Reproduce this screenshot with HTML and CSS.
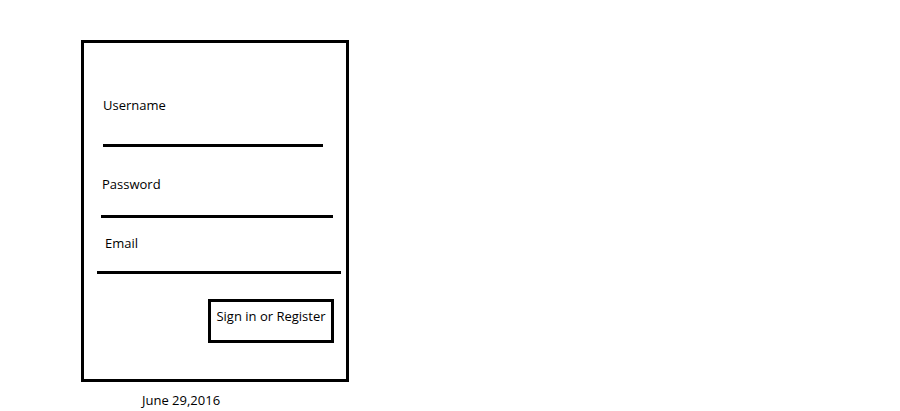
FILE: index.html
```html
<!DOCTYPE html>
<html>
<head>
<meta charset="utf-8">
<link rel="stylesheet" href="styles.css">
</head>
<body>
<div class="page">
  <form class="card">
    <div class="field field-user">
      <div class="label">Username</div>
      <div class="line"></div>
    </div>
    <div class="field field-pass">
      <div class="label">Password</div>
      <div class="line"></div>
    </div>
    <div class="field field-email">
      <div class="label">Email</div>
      <div class="line"></div>
    </div>
    <div class="actions">
      <div class="button">Sign in or Register</div>
    </div>
  </form>
  <div class="date">June 29,2016</div>
</div>
</body>
</html>
```
FILE: styles.css
```css
html, body {
  margin: 0;
  padding: 0;
  background: #fff;
}
body {
  font-family: "Open Sans", "Noto Sans", "DejaVu Sans", sans-serif;
  font-size: 13px;
  color: #000;
}
.page {
  padding: 40px 0 0 81px;
}
.card {
  width: 268px;
  height: 342px;
  margin: 0;
  border: 3px solid #000;
  padding-top: 54px;
  box-sizing: border-box;
  display: flex;
  flex-direction: column;
}
.label {
  line-height: 16px;
}
.line {
  height: 3px;
  background: #000;
}
.field-user .label { margin-left: 19px; }
.field-user .line { margin: 31px 0 0 19px; width: 220px; }
.field-pass { margin-top: 29px; }
.field-pass .label { margin-left: 18px; }
.field-pass .line { margin: 23px 0 0 17px; width: 232px; }
.field-email { margin-top: 17px; }
.field-email .label { margin-left: 21px; }
.field-email .line { margin: 20px 0 0 13px; width: 244px; }
.actions {
  margin-top: 25px;
  padding-left: 124px;
}
.button {
  width: 120px;
  height: 32px;
  padding-top: 6px;
  border: 3px solid #000;
  box-sizing: content-box;
  text-align: center;
  line-height: 16px;
}
.date {
  margin: 10px 0 0 61px;
  line-height: 16px;
}
```
